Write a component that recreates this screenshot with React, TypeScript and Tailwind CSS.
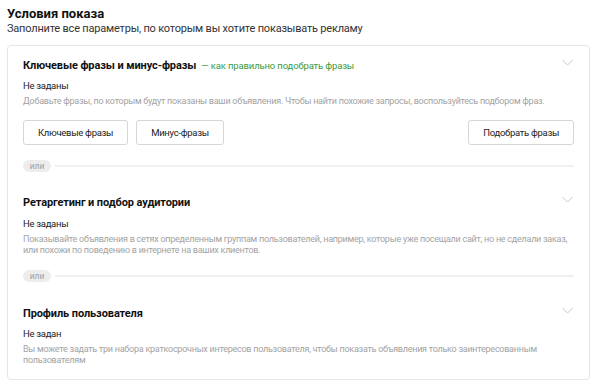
import React from "react";

const font = { fontFamily: 'Roboto, "Noto Sans", sans-serif' };

function Chevron() {
  return (
    <svg width="11" height="7" viewBox="0 0 11 7" className="mt-[1px] mr-[1px] shrink-0">
      <polyline points="0.5,1 5.5,6 10.5,1" fill="none" stroke="#c8c8c8" strokeWidth="1" />
    </svg>
  );
}

function Divider({ className }: { className: string }) {
  return (
    <div className={"flex items-center gap-[4px] " + className}>
      <span className="h-[12px] w-[28px] rounded-full bg-[#ededed] text-[8.5px] leading-[12px] text-[#a0a0a0] text-center">
        или
      </span>
      <div className="h-[2px] flex-1 bg-[#f0f0f0]" />
    </div>
  );
}

function Btn({ children }: { children: React.ReactNode }) {
  return (
    <button className="h-[25px] px-[14px] rounded-[3px] border border-[#d6d6d6] bg-white text-[9.5px] tracking-[-0.3px] text-[#222] leading-[23px]">
      {children}
    </button>
  );
}

const h = "text-[11px] tracking-[-0.1px] font-bold leading-[16px] text-[#111]";
const ns = "text-[9.5px] tracking-[-0.3px] leading-[14px] text-[#222]";
const desc = "mt-[3px] text-[9px] tracking-[-0.25px] leading-[11px] text-[#a3a3a3]";

export default function App() {
  return (
    <div className="w-[594px] h-[380px] bg-white pl-[7px] pr-[4px] overflow-hidden" style={font}>
      <div className="pt-[6px] text-[13px] font-bold leading-[16px] text-[#111]">Условия показа</div>
      <div className="text-[11px] tracking-[-0.2px] leading-[14px] text-[#333]">
        Заполните все параметры, по которым вы хотите показывать рекламу
      </div>
      <div className="mt-[9px] rounded-[4px] border border-[#e6e6e6] shadow-[0_0_2px_rgba(0,0,0,0.04)] px-[15px] pt-[12px] pb-[13px]">
        {/* Section 1 */}
        <div className="flex items-start justify-between h-[16px]">
          <div className="flex items-baseline">
            <span className={h}>Ключевые фразы и минус-фразы</span>
            <span className="ml-[5px] text-[9.5px] tracking-[-0.15px] leading-[16px] text-[#3b9a3f]">— как правильно подобрать фразы</span>
          </div>
          <Chevron />
        </div>
        <div className={"mt-[5px] " + ns}>Не заданы</div>
        <div className={desc}>
          Добавьте фразы, по которым будут показаны ваши объявления. Чтобы найти похожие запросы, воспользуйтесь подбором фраз.
        </div>
        <div className="mt-[12px] flex items-center">
          <div className="flex gap-[8px]">
            <Btn>Ключевые фразы</Btn>
            <Btn>Минус-фразы</Btn>
          </div>
          <div className="ml-auto">
            <Btn>Подобрать фразы</Btn>
          </div>
        </div>
        <Divider className="mt-[15px]" />

        {/* Section 2 */}
        <div className="mt-[23px] flex items-start justify-between h-[16px]">
          <span className={h}>Ретаргетинг и подбор аудитории</span>
          <Chevron />
        </div>
        <div className={"mt-[6px] " + ns}>Не заданы</div>
        <div className={desc}>
          Показывайте объявления в сетях определенным группам пользователей, например, которые уже посещали сайт, но не сделали заказ, или похожи по поведению в интернете на ваших клиентов.
        </div>
        <Divider className="mt-[14px]" />

        {/* Section 3 */}
        <div className="mt-[24px] flex items-start justify-between h-[16px]">
          <span className={h}>Профиль пользователя</span>
          <Chevron />
        </div>
        <div className={"mt-[5px] " + ns}>Не задан</div>
        <div className={desc}>
          Вы можете задать три набора краткосрочных интересов пользователя, чтобы показать объявления только заинтересованным пользователям
        </div>
      </div>
    </div>
  );
}
